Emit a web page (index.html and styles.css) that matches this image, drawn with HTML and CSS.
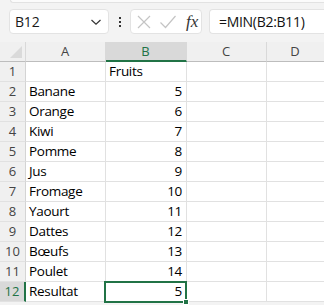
FILE: index.html
```html
<!DOCTYPE html>
<html>
<head>
<meta charset="utf-8">
<link rel="stylesheet" href="styles.css">
</head>
<body>
<div class="app">
  <div class="ribbon-edge"></div>
  <div class="fbar">
    <div class="namebox">
      <span class="name">B12</span>
      <svg class="chev" width="12" height="8" viewBox="0 0 12 8"><path d="M1.5 2 L6 6.2 L10.5 2" fill="none" stroke="#333" stroke-width="1.2"/></svg>
    </div>
    <div class="kebab"><i></i><i></i><i></i></div>
    <div class="fbtns">
      <svg width="16" height="16" viewBox="0 0 16 16"><path d="M2 2 L14 14 M14 2 L2 14" stroke="#c4c4c4" stroke-width="1.2" fill="none"/></svg>
      <svg width="18" height="16" viewBox="0 0 18 16"><path d="M1.5 8.5 L6.5 13.5 L16.5 2" stroke="#c4c4c4" stroke-width="1.2" fill="none"/></svg>
      <span class="fx">fx</span>
    </div>
    <div class="formula">=MIN(B2:B11)</div>
  </div>
  <div class="sheet">
    <div class="row head">
      <div class="rh corner"><svg width="12" height="12" viewBox="0 0 12 12"><path d="M12 0 L12 12 L0 12 Z" fill="#dadada"/></svg></div>
      <div class="c a">A</div>
      <div class="c b sel">B</div>
      <div class="c cc">C</div>
      <div class="c d">D</div>
    </div>
    <div class="row"><div class="rh">1</div><div class="c a"></div><div class="c b">Fruits</div><div class="c cc"></div><div class="c d"></div></div>
    <div class="row"><div class="rh">2</div><div class="c a">Banane</div><div class="c b n">5</div><div class="c cc"></div><div class="c d"></div></div>
    <div class="row"><div class="rh">3</div><div class="c a">Orange</div><div class="c b n">6</div><div class="c cc"></div><div class="c d"></div></div>
    <div class="row"><div class="rh">4</div><div class="c a">Kiwi</div><div class="c b n">7</div><div class="c cc"></div><div class="c d"></div></div>
    <div class="row"><div class="rh">5</div><div class="c a">Pomme</div><div class="c b n">8</div><div class="c cc"></div><div class="c d"></div></div>
    <div class="row"><div class="rh">6</div><div class="c a">Jus</div><div class="c b n">9</div><div class="c cc"></div><div class="c d"></div></div>
    <div class="row"><div class="rh">7</div><div class="c a">Fromage</div><div class="c b n">10</div><div class="c cc"></div><div class="c d"></div></div>
    <div class="row"><div class="rh">8</div><div class="c a">Yaourt</div><div class="c b n">11</div><div class="c cc"></div><div class="c d"></div></div>
    <div class="row"><div class="rh">9</div><div class="c a">Dattes</div><div class="c b n">12</div><div class="c cc"></div><div class="c d"></div></div>
    <div class="row"><div class="rh">10</div><div class="c a">Bœufs</div><div class="c b n">13</div><div class="c cc"></div><div class="c d"></div></div>
    <div class="row"><div class="rh">11</div><div class="c a">Poulet</div><div class="c b n">14</div><div class="c cc"></div><div class="c d"></div></div>
    <div class="row"><div class="rh selr">12</div><div class="c a">Resultat</div><div class="c b n">5</div><div class="c cc"></div><div class="c d"></div></div>
    <div class="selbox"><span class="handle"></span></div>
  </div>
</div>
</body>
</html>
```

FILE: styles.css
```css
* { box-sizing: border-box; }
html, body { margin: 0; padding: 0; }
body {
  width: 324px;
  height: 305px;
  overflow: hidden;
  background: #f3f3f3;
  font-family: "Open Sans", "Noto Sans", sans-serif;
  color: #000;
}
.app { width: 324px; }
.ribbon-edge {
  height: 3px;
  margin-left: 10px;
  background: #fbfbfb;
  border-bottom: 1px solid #e2e2e2;
  border-left: 1px solid #e2e2e2;
  border-bottom-left-radius: 4px;
}
.fbar {
  display: flex;
  align-items: center;
  height: 25px;
  margin-top: 6px;
  padding-left: 9px;
}
.namebox {
  width: 100px;
  height: 25px;
  background: #fff;
  border: 1px solid #e3e3e3;
  border-radius: 4px;
  display: flex;
  align-items: center;
  justify-content: space-between;
  padding: 0 6px 0 5px;
}
.name { font-size: 14px; color: #1a1a1a; letter-spacing: -0.2px; }
.kebab {
  width: 21px;
  display: flex;
  flex-direction: column;
  align-items: center;
  gap: 2px;
}
.kebab i { display: block; width: 2px; height: 2px; background: #333; }
.fbtns {
  width: 72px;
  height: 25px;
  background: #fff;
  border: 1px solid #e3e3e3;
  border-radius: 4px;
  display: flex;
  align-items: center;
  gap: 7px;
  padding-left: 5px;
}
.fx {
  font-family: "Liberation Serif", "DejaVu Serif", serif;
  font-style: italic;
  font-size: 17px;
  color: #333;
  margin-left: 2px;
}
.formula {
  flex: 1;
  height: 25px;
  margin-left: 7px;
  background: #fff;
  border: 1px solid #e3e3e3;
  border-right: none;
  border-radius: 4px 0 0 4px;
  padding-left: 9px;
  font-size: 14px;
  line-height: 23px;
  color: #111;
  letter-spacing: -0.3px;
}
.sheet {
  position: relative;
  margin-top: 8px;
  background: #fff;
}
.row { display: flex; height: 20px; }
.rh {
  width: 26px;
  flex: none;
  background: #f0f0f0;
  border-right: 1px solid #d4d4d4;
  border-bottom: 1px solid #e1e1e1;
  text-align: center;
  font-size: 13px;
  line-height: 19px;
  color: #444;
}
.c {
  flex: none;
  height: 20px;
  border-right: 1px solid #e1e1e1;
  border-bottom: 1px solid #e1e1e1;
  font-size: 13.5px;
  line-height: 19px;
  padding: 0 4px 0 3px;
  white-space: nowrap;
  letter-spacing: -0.3px;
}
.a { width: 80px; }
.b { width: 81px; }
.cc { width: 80px; }
.d { flex: 1; border-right: none; }
.n { text-align: right; }
.head { height: 20px; }
.head .rh, .head .c {
  background: #f0f0f0;
  border-bottom: 1px solid #bdbdbd;
  border-right: 1px solid #d9d9d9;
  text-align: center;
  font-size: 13px;
  color: #444;
  letter-spacing: 0;
}
.head .d { border-right: none; }
.head .corner {
  display: flex;
  align-items: flex-end;
  justify-content: flex-end;
  padding: 0 3px 3px 0;
}
.head .sel {
  background: #d9d9d9;
  color: #217346;
  border-bottom: 2px solid #217346;
  line-height: 18px;
}
.rh.selr {
  background: #d9d9d9;
  color: #217346;
  border-right: 2px solid #217346;
}
.selbox {
  position: absolute;
  left: 104px;
  top: 239px;
  width: 83px;
  height: 22px;
  border: 2px solid #217346;
}
.handle {
  position: absolute;
  right: -4px;
  bottom: -4px;
  width: 6px;
  height: 6px;
  background: #217346;
  border: 1px solid #fff;
}
```
